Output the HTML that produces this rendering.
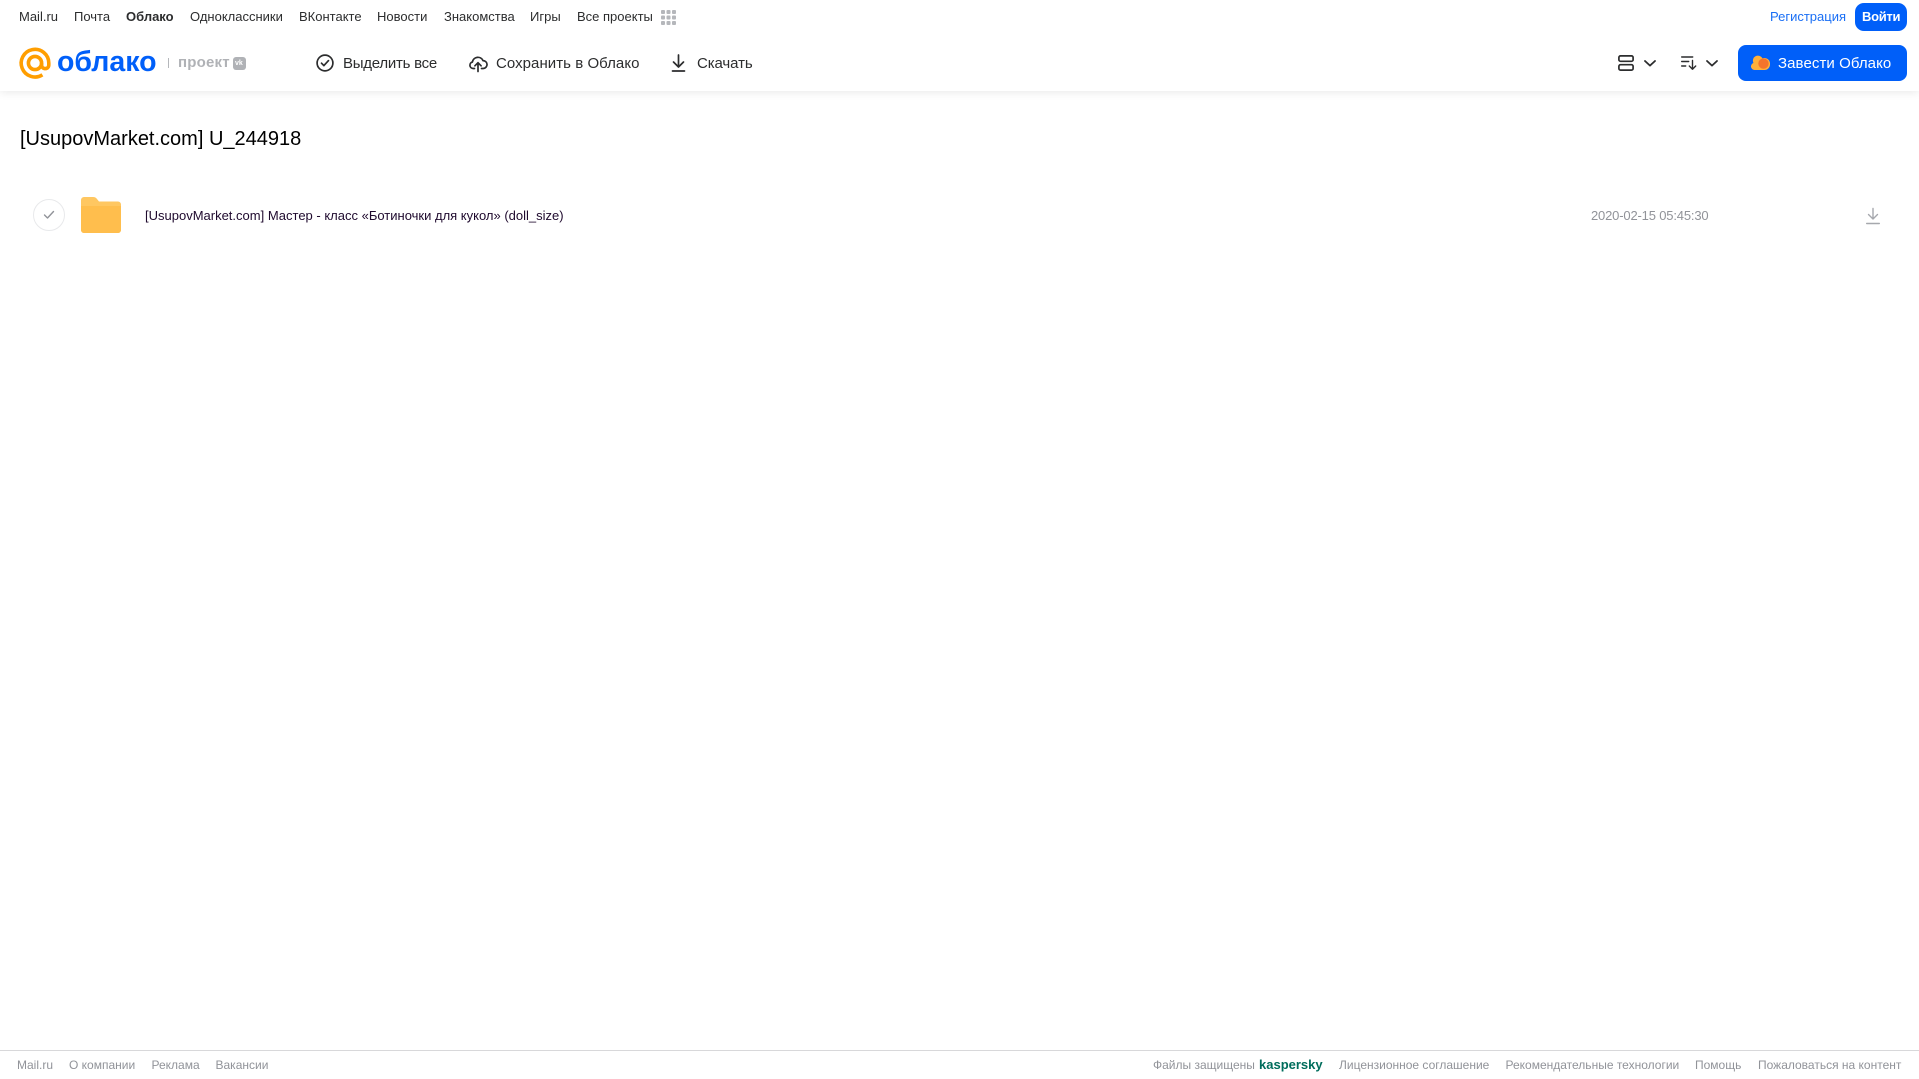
<!DOCTYPE html>
<html lang="ru">
<head>
<meta charset="utf-8">
<title>Облако</title>
<style>
html,body{margin:0;padding:0;background:#fff;}
body{position:relative;width:1919px;height:1079px;overflow:hidden;font-family:"Liberation Sans",Arial,sans-serif;}
.t{position:absolute;white-space:nowrap;line-height:16px;}
.top{top:9px;font-size:13px;color:#2c2d2e;}
.tb{top:55.500px;font-size:15px;color:#2c2d2e;}
.ft{top:1057px;font-size:12px;color:#919399;}
svg{position:absolute;overflow:visible;}
#shadow{position:absolute;left:0;top:0;width:1919px;height:91px;background:#fff;box-shadow:0 2px 8px rgba(0,0,0,.08);}
</style>
</head>
<body>
<div id="shadow"></div>

<span class="t top" style="left:19px">Mail.ru</span>
<span class="t top" style="left:74px">Почта</span>
<span class="t top" style="left:126px;font-weight:bold">Облако</span>
<span class="t top" style="left:190px">Одноклассники</span>
<span class="t top" style="left:299px">ВКонтакте</span>
<span class="t top" style="left:377px">Новости</span>
<span class="t top" style="left:444px">Знакомства</span>
<span class="t top" style="left:530px">Игры</span>
<span class="t top" style="left:577px">Все проекты</span>
<svg style="left:661px;top:10px" width="15" height="15" viewBox="0 0 15 15" fill="#b5b7bb">
<rect x="0" y="0" width="4" height="4" rx="1"/><rect x="5.500" y="0" width="4" height="4" rx="1"/><rect x="11" y="0" width="4" height="4" rx="1"/>
<rect x="0" y="5.500" width="4" height="4" rx="1"/><rect x="5.500" y="5.500" width="4" height="4" rx="1"/><rect x="11" y="5.500" width="4" height="4" rx="1"/>
<rect x="0" y="11" width="4" height="4" rx="1"/><rect x="5.500" y="11" width="4" height="4" rx="1"/><rect x="11" y="11" width="4" height="4" rx="1"/>
</svg>

<span class="t" style="left:1770px;top:9px;font-size:13px;color:#1a6ff5">Регистрация</span>
<div style="position:absolute;left:1855px;top:3px;width:52px;height:28px;border-radius:9px;background:#005ff9"></div>
<span class="t" style="left:1862px;top:9px;font-size:13px;color:#fff;font-weight:bold;letter-spacing:-.3px">Войти</span>

<svg style="left:19px;top:47px" width="32" height="32" viewBox="0 0 32 32" fill="none" stroke="#ff9e00" stroke-width="3.600">
<circle cx="16" cy="16" r="6.600"/>
<path d="M22.600 16v2a3.600 3.600 0 0 0 7.200 0v-2A13.800 13.800 0 1 0 23.400 27.800"/>
</svg>
<span class="t" style="left:57px;top:44px;font-size:28.500px;line-height:36px;font-weight:bold;color:#005ff9">облако</span>
<div style="position:absolute;left:168px;top:58px;width:1px;height:10px;background:#b5b7bb"></div>
<span class="t" style="left:178px;top:55px;font-size:15px;font-weight:bold;color:#b0b2b6;letter-spacing:.2px">проект</span>
<div style="position:absolute;left:233px;top:57px;width:13px;height:13px;border-radius:3px;background:#b0b2b6"></div>
<span class="t" style="left:235px;top:59px;font-size:7px;line-height:9px;font-weight:bold;color:#fff">vk</span>

<svg style="left:316px;top:54px" width="18" height="18" viewBox="0 0 18 18" fill="none" stroke="#2c2d2e" stroke-width="1.700">
<circle cx="9" cy="9" r="7.900"/><path d="M5.500 9.200l2.400 2.400 4.600-5" stroke-linecap="round" stroke-linejoin="round"/>
</svg>
<span class="t tb" style="left:343px;letter-spacing:-.25px">Выделить все</span>

<svg style="left:469px;top:54px" width="18" height="18" viewBox="0 0 18 18" fill="none" stroke="#2c2d2e" stroke-width="1.700" stroke-linecap="round" stroke-linejoin="round">
<path d="M5.500 14.500H4.200A3.300 3.300 0 0 1 3.400 8 5.600 5.600 0 0 1 14 6.600a3.800 3.800 0 0 1 .2 7.900h-1.700"/><path d="M9 17.500V9M5.900 11.800L9 8.700l3.100 3.100"/>
</svg>
<span class="t tb" style="left:496px;letter-spacing:.05px">Сохранить в Облако</span>

<svg style="left:671px;top:54px" width="15" height="18" viewBox="0 0 15 18" fill="none" stroke="#2c2d2e" stroke-width="1.700" stroke-linecap="round" stroke-linejoin="round">
<path d="M7.500 1v11.500M2.500 8l5 5 5-5M1.500 17h12"/>
</svg>
<span class="t tb" style="left:697px;letter-spacing:-.1px">Скачать</span>

<svg style="left:1618px;top:55px" width="16" height="16" viewBox="0 0 16 16" fill="none" stroke="#2c2d2e" stroke-width="1.700">
<rect x=".9" y=".9" width="14.200" height="5.400" rx="1.600"/><rect x=".9" y="9.700" width="14.200" height="5.400" rx="1.600"/>
</svg>
<svg style="left:1644px;top:60px" width="12" height="7" viewBox="0 0 12 7" fill="none" stroke="#2c2d2e" stroke-width="1.800" stroke-linecap="round" stroke-linejoin="round"><path d="M1 1l5 4.600L11 1"/></svg>
<svg style="left:1681px;top:56px" width="16" height="14" viewBox="0 0 16 14" fill="none" stroke="#2c2d2e" stroke-width="1.400" stroke-linecap="round" stroke-linejoin="round">
<path d="M.7 1h11M.7 5.500h7M.7 10h4M11.500 4.500v8.500M8.300 10l3.200 3.200 3.200-3.200"/>
</svg>
<svg style="left:1706px;top:60px" width="12" height="7" viewBox="0 0 12 7" fill="none" stroke="#2c2d2e" stroke-width="1.800" stroke-linecap="round" stroke-linejoin="round"><path d="M1 1l5 4.600L11 1"/></svg>

<div style="position:absolute;left:1738px;top:45px;width:169px;height:36px;border-radius:8px;background:#005ff9"></div>
<svg style="left:1751px;top:55px" width="19" height="15" viewBox="0 0 19 15">
<path d="M3.600 15A3.600 3.600 0 0 1 2.400 8 5 5 0 0 1 11.500 3.400 5.600 5.600 0 0 1 19 9.400 5.600 5.600 0 0 1 13.500 15z" fill="#ffb03a"/>
<circle cx="12.500" cy="8.600" r="5.200" fill="#f4742b"/>
</svg>
<span class="t tb" style="left:1778px;color:#fff;letter-spacing:.08px">Завести Облако</span>

<span class="t" style="left:20px;top:126px;font-size:20px;line-height:26px;color:#000">[UsupovMarket.com] U_244918</span>

<div style="position:absolute;left:33px;top:199px;width:30px;height:30px;border:1px solid #e8e9eb;border-radius:50%"></div>
<svg style="left:43px;top:210px" width="12" height="10" viewBox="0 0 12 10" fill="none" stroke="#919399" stroke-width="1.400" stroke-linecap="round" stroke-linejoin="round"><path d="M1.500 5l3 3L10.500 1.500"/></svg>

<svg style="left:81px;top:197px" width="40" height="36" viewBox="0 0 40 36">
<path d="M0 3a3 3 0 0 1 3-3h9c2 0 3 .8 4 2l2 2.500h19a3 3 0 0 1 3 3V33a3 3 0 0 1-3 3H3a3 3 0 0 1-3-3z" fill="#ffc761"/>
<path d="M0 9h40v24a3 3 0 0 1-3 3H3a3 3 0 0 1-3-3z" fill="#ffbe4d"/>
</svg>

<span class="t" style="left:145px;top:208px;font-size:13px;color:#1f0a2e">[UsupovMarket.com] Мастер - класс «Ботиночки для кукол» (doll_size)</span>
<span class="t" style="left:1591px;top:208px;font-size:13px;letter-spacing:-.17px;color:#919399">2020-02-15 05:45:30</span>
<svg style="left:1866px;top:207px" width="14" height="18" viewBox="0 0 14 18" fill="none" stroke="#a6a8ad" stroke-width="1.400" stroke-linecap="round" stroke-linejoin="round">
<path d="M7 1.500v10.500M2.500 7.500L7 12l4.500-4.500M.7 16.500h12.600"/>
</svg>

<div style="position:absolute;left:0;top:1050px;width:1919px;height:1px;background:#d8d8da"></div>
<span class="t ft" style="left:17px">Mail.ru</span>
<span class="t ft" style="left:69px">О компании</span>
<span class="t ft" style="left:151.500px">Реклама</span>
<span class="t ft" style="left:215.500px">Вакансии</span>
<span class="t ft" style="left:1153px">Файлы защищены</span>
<span class="t ft" style="left:1259px;font-size:13px;font-weight:bold;color:#006d5c">kaspersky</span>
<span class="t ft" style="left:1339px">Лицензионное соглашение</span>
<span class="t ft" style="left:1505.500px">Рекомендательные технологии</span>
<span class="t ft" style="left:1695px">Помощь</span>
<span class="t ft" style="left:1758px">Пожаловаться на контент</span>
</body>
</html>
